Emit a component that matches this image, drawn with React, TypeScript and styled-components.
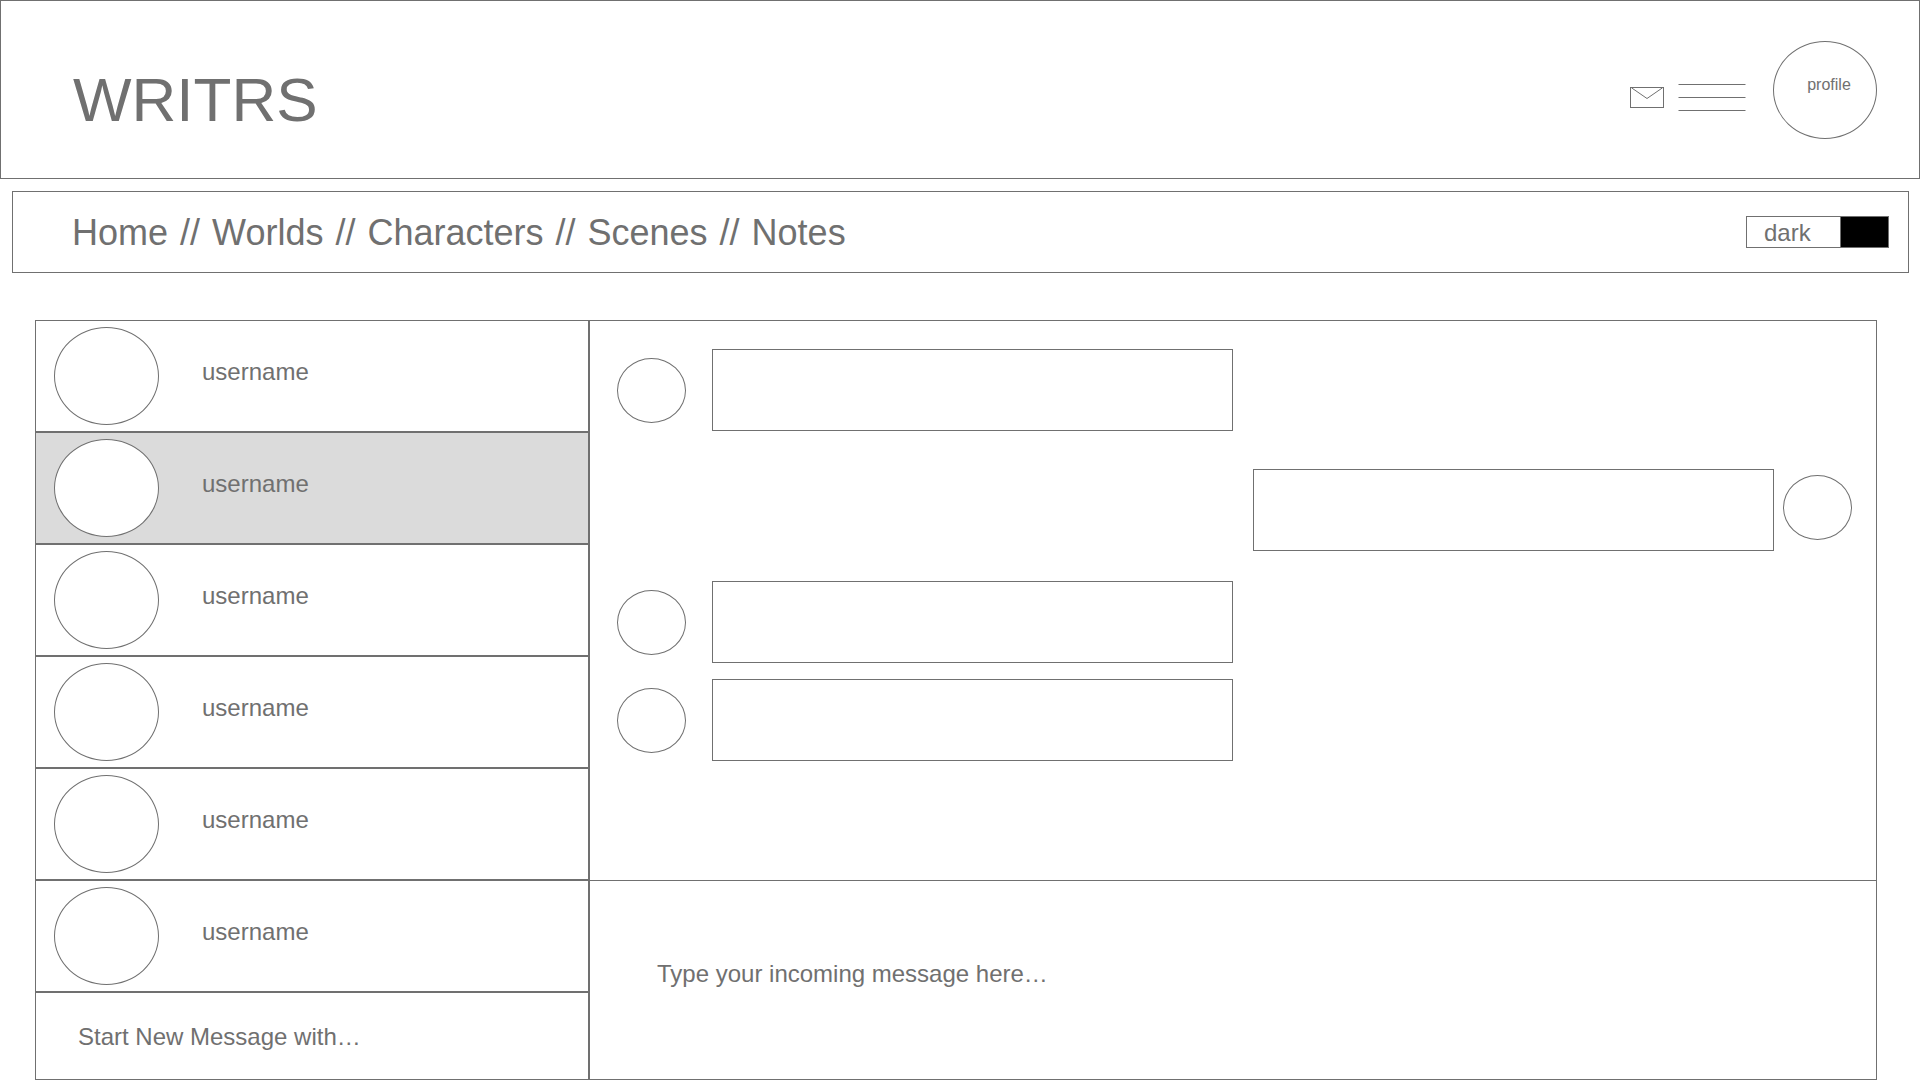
import React, { useState } from 'react';
import styled, { createGlobalStyle } from 'styled-components';

const ink = '#707070';
const line = `1px solid ${ink}`;

const GlobalStyle = createGlobalStyle`
  *, *::before, *::after { box-sizing: border-box; }
  body {
    margin: 0;
    background: #fff;
    color: ${ink};
    font-family: "Liberation Sans", Arial, Helvetica, sans-serif;
    font-size: 24px;
    line-height: 28px;
  }
  button, input, textarea {
    font: inherit;
    color: inherit;
    border: 0;
    border-radius: 0;
    background: transparent;
    padding: 0;
    margin: 0;
  }
  button { cursor: pointer; }
`;

const Page = styled.div`
  display: flex;
  flex-direction: column;
  min-height: 100vh;
`;

const Header = styled.header`
  display: flex;
  justify-content: space-between;
  align-items: flex-start;
  padding: 40px 42px 39px 72px;
  border: ${line};
`;

const Brand = styled.h1`
  margin: 0;
  padding-top: 23px;
  font-size: 62px;
  line-height: 72px;
  font-weight: 400;
`;

const HeaderActions = styled.div`
  display: flex;
  align-items: center;
  gap: 27px;
`;

const IconGroup = styled.div`
  display: flex;
  align-items: center;
  gap: 14px;
  padding-top: 15px;
`;

const IconButton = styled.button`
  display: flex;

  svg {
    display: block;
    fill: none;
    stroke: ${ink};
  }
`;

const ProfileLink = styled.a`
  display: flex;
  align-items: center;
  justify-content: center;
  width: 104px;
  height: 98px;
  padding: 0 0 10px 8px;
  border: ${line};
  border-radius: 50%;
  color: inherit;
  font-size: 16px;
  line-height: 20px;
  text-decoration: none;
`;

const NavBar = styled.div`
  display: flex;
  justify-content: space-between;
  align-items: center;
  margin: 12px 11px 0 12px;
  padding: 19px 19px 19px 59px;
  border: ${line};
`;

const NavList = styled.ul`
  display: flex;
  margin: 0;
  padding: 2px 0 0;
  list-style: none;
  font-size: 36px;
  line-height: 40px;
  white-space: pre;
`;

const Separator = styled.span`
  padding: 0 2px;
`;

const NavLink = styled.a`
  color: inherit;
  text-decoration: none;
`;

const ThemeToggle = styled.label`
  display: flex;
  align-items: stretch;
  height: 32px;
  border: ${line};
  line-height: 32px;
  cursor: pointer;
`;

const ThemeName = styled.span`
  width: 93px;
  padding-left: 17px;
`;

const ThemeSwitch = styled.input`
  appearance: none;
  width: 48px;
  border-left: ${line};
  background: #000;
  cursor: pointer;
`;

const Messenger = styled.main`
  flex: 1;
  display: grid;
  grid-template-columns: minmax(0, 554fr) minmax(0, 1286fr);
  margin: 47px 43px 0 35px;
  border: ${line};
`;

const Sidebar = styled.aside`
  display: flex;
  flex-direction: column;
  border-right: 2px solid ${ink};
`;

const ContactList = styled.ul`
  margin: 0;
  padding: 0;
  list-style: none;
`;

const Contact = styled.button<{ $active: boolean }>`
  display: flex;
  align-items: center;
  gap: 43px;
  width: 100%;
  padding: 6px 18px;
  border-bottom: 2px solid ${ink};
  background: ${(p) => (p.$active ? '#dbdbdb' : 'transparent')};
  text-align: left;
`;

const Avatar = styled.span<{ $small?: boolean }>`
  flex: none;
  width: ${(p) => (p.$small ? 69 : 105)}px;
  height: ${(p) => (p.$small ? 65 : 98)}px;
  border: ${line};
  border-radius: 50%;
  background: #fff;
`;

const ContactName = styled.span`
  padding-bottom: 8px;
`;

const NewMessage = styled.input`
  flex: 1;
  width: 100%;
  min-height: 86px;
  padding: 2px 42px 0;
  outline: none;

  &::placeholder { color: ${ink}; opacity: 1; }
`;

const Conversation = styled.section`
  display: flex;
  flex-direction: column;
`;

const Thread = styled.ol`
  flex: 1;
  display: flex;
  flex-direction: column;
  margin: 0;
  padding: 28px 24px 28px 27px;
  list-style: none;
`;

const Message = styled.li<{ $outgoing: boolean; $space: number }>`
  display: flex;
  flex-direction: ${(p) => (p.$outgoing ? 'row-reverse' : 'row')};
  align-items: ${(p) => (p.$outgoing ? 'flex-start' : 'center')};
  gap: ${(p) => (p.$outgoing ? 9 : 26)}px;
  margin-top: ${(p) => p.$space}px;

  ${Avatar} { margin-top: ${(p) => (p.$outgoing ? 6 : 0)}px; }
`;

const Bubble = styled.p`
  flex: 0 1 521px;
  min-height: 82px;
  margin: 0;
  padding: 26px 20px;
  border: ${line};
`;

const Composer = styled.textarea`
  display: block;
  width: 100%;
  height: 199px;
  padding: 79px 67px 20px;
  border-top: ${line};
  outline: none;
  resize: none;

  &::placeholder { color: ${ink}; opacity: 1; }
`;

const sections = ['Home', 'Worlds', 'Characters', 'Scenes', 'Notes'];
const contacts = Array.from({ length: 6 }, (_, id) => ({ id, name: 'username' }));
const messages = [
  { id: 1, outgoing: false, space: 0, text: '' },
  { id: 2, outgoing: true, space: 38, text: '' },
  { id: 3, outgoing: false, space: 30, text: '' },
  { id: 4, outgoing: false, space: 16, text: '' },
];

export default function App() {
  const [active, setActive] = useState(1);

  return (
    <Page>
      <GlobalStyle />
      <Header>
        <Brand>WRITRS</Brand>
        <HeaderActions>
          <IconGroup>
            <IconButton type="button" aria-label="Messages">
              <svg width="34" height="21" viewBox="0 0 34 21">
                <rect x="0.5" y="0.5" width="33" height="20" />
                <path d="M1.5 0.8 L17 11.5 L32.5 0.8" />
              </svg>
            </IconButton>
            <IconButton type="button" aria-label="Menu">
              <svg width="68" height="27" viewBox="0 0 68 27">
                <path d="M0.5 0.5 H67.5 M0.5 13.5 H67.5 M0.5 26.5 H67.5" />
              </svg>
            </IconButton>
          </IconGroup>
          <ProfileLink href="#profile">profile</ProfileLink>
        </HeaderActions>
      </Header>

      <NavBar>
        <nav>
          <NavList>
            {sections.map((name, i) => (
              <li key={name}>
                {i > 0 && <Separator>{' // '}</Separator>}
                <NavLink href={`#${name.toLowerCase()}`}>{name}</NavLink>
              </li>
            ))}
          </NavList>
        </nav>
        <ThemeToggle>
          <ThemeName>dark</ThemeName>
          <ThemeSwitch type="checkbox" role="switch" />
        </ThemeToggle>
      </NavBar>

      <Messenger>
        <Sidebar>
          <ContactList>
            {contacts.map(({ id, name }) => (
              <li key={id}>
                <Contact type="button" $active={id === active} onClick={() => setActive(id)}>
                  <Avatar />
                  <ContactName>{name}</ContactName>
                </Contact>
              </li>
            ))}
          </ContactList>
          <NewMessage type="text" aria-label="Start new message" placeholder="Start New Message with…" />
        </Sidebar>

        <Conversation>
          <Thread>
            {messages.map((m) => (
              <Message key={m.id} $outgoing={m.outgoing} $space={m.space}>
                <Avatar $small />
                <Bubble>{m.text}</Bubble>
              </Message>
            ))}
          </Thread>
          <Composer aria-label="Message" placeholder="Type your incoming message here…" />
        </Conversation>
      </Messenger>
    </Page>
  );
}
